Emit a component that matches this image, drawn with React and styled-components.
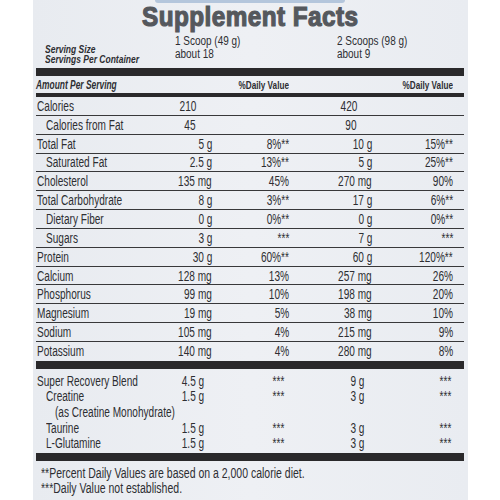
import React from "react";
import styled, { createGlobalStyle } from "styled-components";

const Global = createGlobalStyle`
  html, body { margin: 0; padding: 0; background: #ffffff; }
  body { font-family: "Liberation Sans", Arial, sans-serif; }
`;

const Page = styled.div`
  width: 500px;
  height: 500px;
  overflow: hidden;
  background: #ffffff;
`;

const Label = styled.div`
  margin-left: 33px;
  width: 435px;
  height: 500px;
  box-sizing: border-box;
  padding: 0 4px 0 3px;
  background: linear-gradient(90deg, #e8ebf0 0%, #eef0f4 50%, #e9ecf1 100%);
  color: #2d2e32;
  display: flex;
  flex-direction: column;
  font-family: "Liberation Sans", Arial, sans-serif;
`;

/* condensed text: Liberation Sans squeezed to mimic Helvetica Condensed */
const Txt = styled.span`
  display: inline-block;
  white-space: nowrap;
  transform: scaleX(${(p) => p.$sx || 0.72});
  transform-origin: ${(p) => p.$origin || "left"} center;
`;

const TopStrip = styled.div`
  height: 3px;
  width: 190px;
  margin: 0 auto;
  background: #b4c6dc;
  border-radius: 0 0 6px 6px;
`;

const Title = styled.h1`
  margin: 0;
  height: 28px;
  font-size: 27px;
  line-height: 28px;
  font-weight: 700;
  text-align: center;
  color: #55585d;
  letter-spacing: 0.5px;
  -webkit-text-stroke: 1.2px #55585d;
`;

const ServingHeader = styled.div`
  display: grid;
  grid-template-columns: 139px 162px 1fr;
  height: 33px;
  margin-top: 4px;
`;

const ServingLeft = styled.div`
  padding-top: 10px;
  padding-left: 9px;
  font-size: 10px;
  line-height: 10px;
  font-weight: 700;
  font-style: italic;
`;

const ServingCol = styled.div`
  font-size: 12px;
  line-height: 12.5px;
`;

const ThickBar = styled.div`
  height: ${(p) => p.$h || 8}px;
  background: #2a292b;
  flex-shrink: 0;
`;

const AmountHeader = styled.div`
  display: grid;
  grid-template-columns: 176px 77px 83px 81px;
  height: 17px;
  align-items: center;
  font-weight: 700;
  font-size: 11.5px;
`;

const AmountLabel = styled.span`
  font-size: 12px;
  font-style: italic;
`;

const DVHead = styled.span`
  grid-column: ${(p) => p.$col};
  text-align: right;
`;

const Row = styled.div`
  display: grid;
  grid-template-columns: ${(p) => p.$cols};
  height: ${(p) => p.$h}px;
  flex-shrink: 0;
  box-sizing: border-box;
  align-items: center;
  font-size: 14px;
  border-bottom: ${(p) => (p.$line ? "1.5px solid #38383a" : "none")};
`;

const RowLabel = styled.span`
  padding-left: ${(p) => p.$indent * 9 + 1}px;
  white-space: nowrap;
`;

const Cell = styled.span`
  text-align: right;
  white-space: nowrap;
  padding-right: ${(p) => p.$pr || 0}px;
`;

const Blend = styled.div`
  display: flex;
  flex-direction: column;
  padding: 4px 0 2px;
`;

const Footnotes = styled.div`
  padding: 5px 0 0 5px;
  font-size: 14px;
  line-height: 15px;
`;

const MAIN_COLS = "112px 64px 77px 83px 81px";
const BLEND_COLS = "110px 58px 80px 80px 87px";

const rows = [
  { label: "Calories", a1: "210", d1: "", a2: "420", d2: "", cal: true },
  { label: "Calories from Fat", indent: 1, a1: "45", d1: "", a2: "90", d2: "", cal: true },
  { label: "Total Fat", a1: "5 g", d1: "8%**", a2: "10 g", d2: "15%**" },
  { label: "Saturated Fat", indent: 1, a1: "2.5 g", d1: "13%**", a2: "5 g", d2: "25%**" },
  { label: "Cholesterol", a1: "135 mg", d1: "45%", a2: "270 mg", d2: "90%" },
  { label: "Total Carbohydrate", a1: "8 g", d1: "3%**", a2: "17 g", d2: "6%**" },
  { label: "Dietary Fiber", indent: 1, a1: "0 g", d1: "0%**", a2: "0 g", d2: "0%**" },
  { label: "Sugars", indent: 1, a1: "3 g", d1: "***", a2: "7 g", d2: "***" },
  { label: "Protein", a1: "30 g", d1: "60%**", a2: "60 g", d2: "120%**" },
  { label: "Calcium", a1: "128 mg", d1: "13%", a2: "257 mg", d2: "26%" },
  { label: "Phosphorus", a1: "99 mg", d1: "10%", a2: "198 mg", d2: "20%" },
  { label: "Magnesium", a1: "19 mg", d1: "5%", a2: "38 mg", d2: "10%" },
  { label: "Sodium", a1: "105 mg", d1: "4%", a2: "215 mg", d2: "9%" },
  { label: "Potassium", a1: "140 mg", d1: "4%", a2: "280 mg", d2: "8%" },
];

const blend = [
  { label: "Super Recovery Blend", indent: 0, a1: "4.5 g", d1: "***", a2: "9 g", d2: "***" },
  { label: "Creatine", indent: 1, a1: "1.5 g", d1: "***", a2: "3 g", d2: "***" },
  { label: "(as Creatine Monohydrate)", indent: 2, a1: "", d1: "", a2: "", d2: "" },
  { label: "Taurine", indent: 1, a1: "1.5 g", d1: "***", a2: "3 g", d2: "***" },
  { label: "L-Glutamine", indent: 1, a1: "1.5 g", d1: "***", a2: "3 g", d2: "***" },
];

function DataRow({ r, cols, h, line }) {
  const R = (v, pr) => (
    <Cell $pr={pr}>
      {v ? <Txt $origin="right">{v}</Txt> : null}
    </Cell>
  );
  return (
    <Row $cols={cols} $h={h} $line={line}>
      <RowLabel $indent={r.indent || 0}>
        <Txt>{r.label}</Txt>
      </RowLabel>
      {R(r.a1, r.cal ? 16 : 0)}
      {R(r.d1)}
      {R(r.a2, r.cal ? 15 : 0)}
      {R(r.d2)}
    </Row>
  );
}

export default function App() {
  return (
    <Page>
      <Global />
      <Label>
        <TopStrip />
        <Title>
          <Txt $sx={0.9} $origin="center">Supplement Facts</Txt>
        </Title>
        <ServingHeader>
          <ServingLeft>
            <div><Txt $sx={0.85}>Serving Size</Txt></div>
            <div><Txt $sx={0.85}>Servings Per Container</Txt></div>
          </ServingLeft>
          <ServingCol>
            <div><Txt $sx={0.83}>1 Scoop (49 g)</Txt></div>
            <div><Txt $sx={0.83}>about 18</Txt></div>
          </ServingCol>
          <ServingCol>
            <div><Txt $sx={0.83}>2 Scoops (98 g)</Txt></div>
            <div><Txt $sx={0.83}>about 9</Txt></div>
          </ServingCol>
        </ServingHeader>
        <ThickBar $h={8} />
        <AmountHeader>
          <AmountLabel><Txt $sx={0.7}>Amount Per Serving</Txt></AmountLabel>
          <DVHead $col={2}><Txt $sx={0.71} $origin="right">%Daily Value</Txt></DVHead>
          <DVHead $col={4}><Txt $sx={0.71} $origin="right">%Daily Value</Txt></DVHead>
        </AmountHeader>
        <ThickBar $h={4} />
        {rows.map((r, i) => (
          <DataRow key={r.label} r={r} cols={MAIN_COLS} h={18.85} line={i < rows.length - 1} />
        ))}
        <ThickBar $h={8} />
        <Blend>
          {blend.map((r) => (
            <DataRow key={r.label} r={r} cols={BLEND_COLS} h={15.6} line={false} />
          ))}
        </Blend>
        <ThickBar $h={8} />
        <Footnotes>
          <div><Txt $sx={0.75}>**Percent Daily Values are based on a 2,000 calorie diet.</Txt></div>
          <div><Txt $sx={0.75}>***Daily Value not established.</Txt></div>
        </Footnotes>
      </Label>
    </Page>
  );
}
